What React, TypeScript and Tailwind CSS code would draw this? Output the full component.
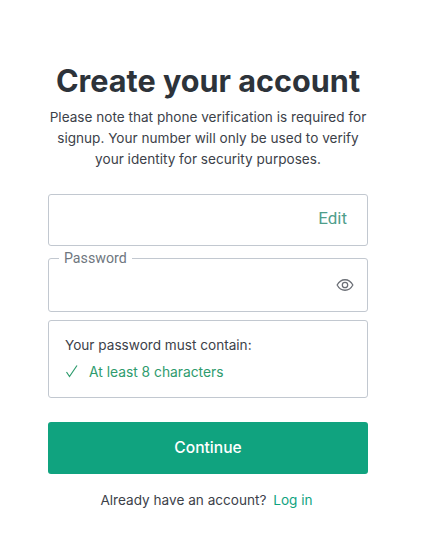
function EyeIcon() {
  return (
    <svg width="18" height="18" viewBox="0 0 24 24" fill="none" stroke="#6b6f76" strokeWidth="1.7" strokeLinecap="round" strokeLinejoin="round">
      <path d="M1.5 12s3.8-7 10.5-7 10.5 7 10.5 7-3.8 7-10.5 7-10.5-7-10.5-7z" />
      <circle cx="12" cy="12" r="3.6" />
    </svg>
  );
}

export default function App() {
  return (
    <div className="h-[557px] w-[432px] overflow-hidden bg-white font-['Inter',sans-serif] text-[#2d333a]">
      <div className="flex flex-col pl-12 pr-16 pt-[63px]">
        <h1 className="text-center text-[30.6px] leading-[36px] font-bold">Create your account</h1>
        <p className="mt-[8px] -mx-2 text-center text-[13.6px] leading-[21px] text-[#3c4149]">
          Please note that phone verification is required for
          <br />
          signup. Your number will only be used to verify
          <br />
          your identity for security purposes.
        </p>
        <div className="mt-[24px] flex h-[52px] items-center justify-end rounded-[3px] border border-[#c2c8d0] pb-[2px] pr-5">
          <span className="font-['Roboto',sans-serif] text-[17px] text-[#4f9e8b]">Edit</span>
        </div>
        <div className="relative mt-3 flex h-[54px] items-center justify-end rounded-[3px] border border-[#c2c8d0] pr-[13px]">
          <span className="absolute -top-[10px] left-[10px] bg-white px-[5px] font-['Roboto',sans-serif] text-[14.2px] leading-[18px] text-[#6f7780]">
            Password
          </span>
          <EyeIcon />
        </div>
        <div className="mt-2 flex h-[78px] flex-col justify-center gap-[6px] rounded-[3px] border border-[#c2c8d0] px-4 pb-px text-[13.6px] leading-[21px]">
          <div className="text-[#3c4149]">Your password must contain:</div>
          <div className="flex items-center text-[13.8px] text-[#2e9b6d]">
            <svg width="14" height="14" viewBox="0 0 14 14" fill="none" stroke="#2e9b6d" strokeWidth="1.2" className="mr-[10px] -translate-y-px">
              <path d="M1.5 8l3 4.5L12 1.5" />
            </svg>
            At least 8 characters
          </div>
        </div>
        <button className="mt-6 h-[52px] rounded-[3px] bg-[#10a37f] text-[15.6px] font-medium text-white">Continue</button>
        <p className="mt-4 pr-[3px] text-center text-[13.6px] leading-[21px] text-[#3c4149]">
          Already have an account? <span className="ml-[3px] text-[#10a37f]">Log in</span>
        </p>
      </div>
    </div>
  );
}
